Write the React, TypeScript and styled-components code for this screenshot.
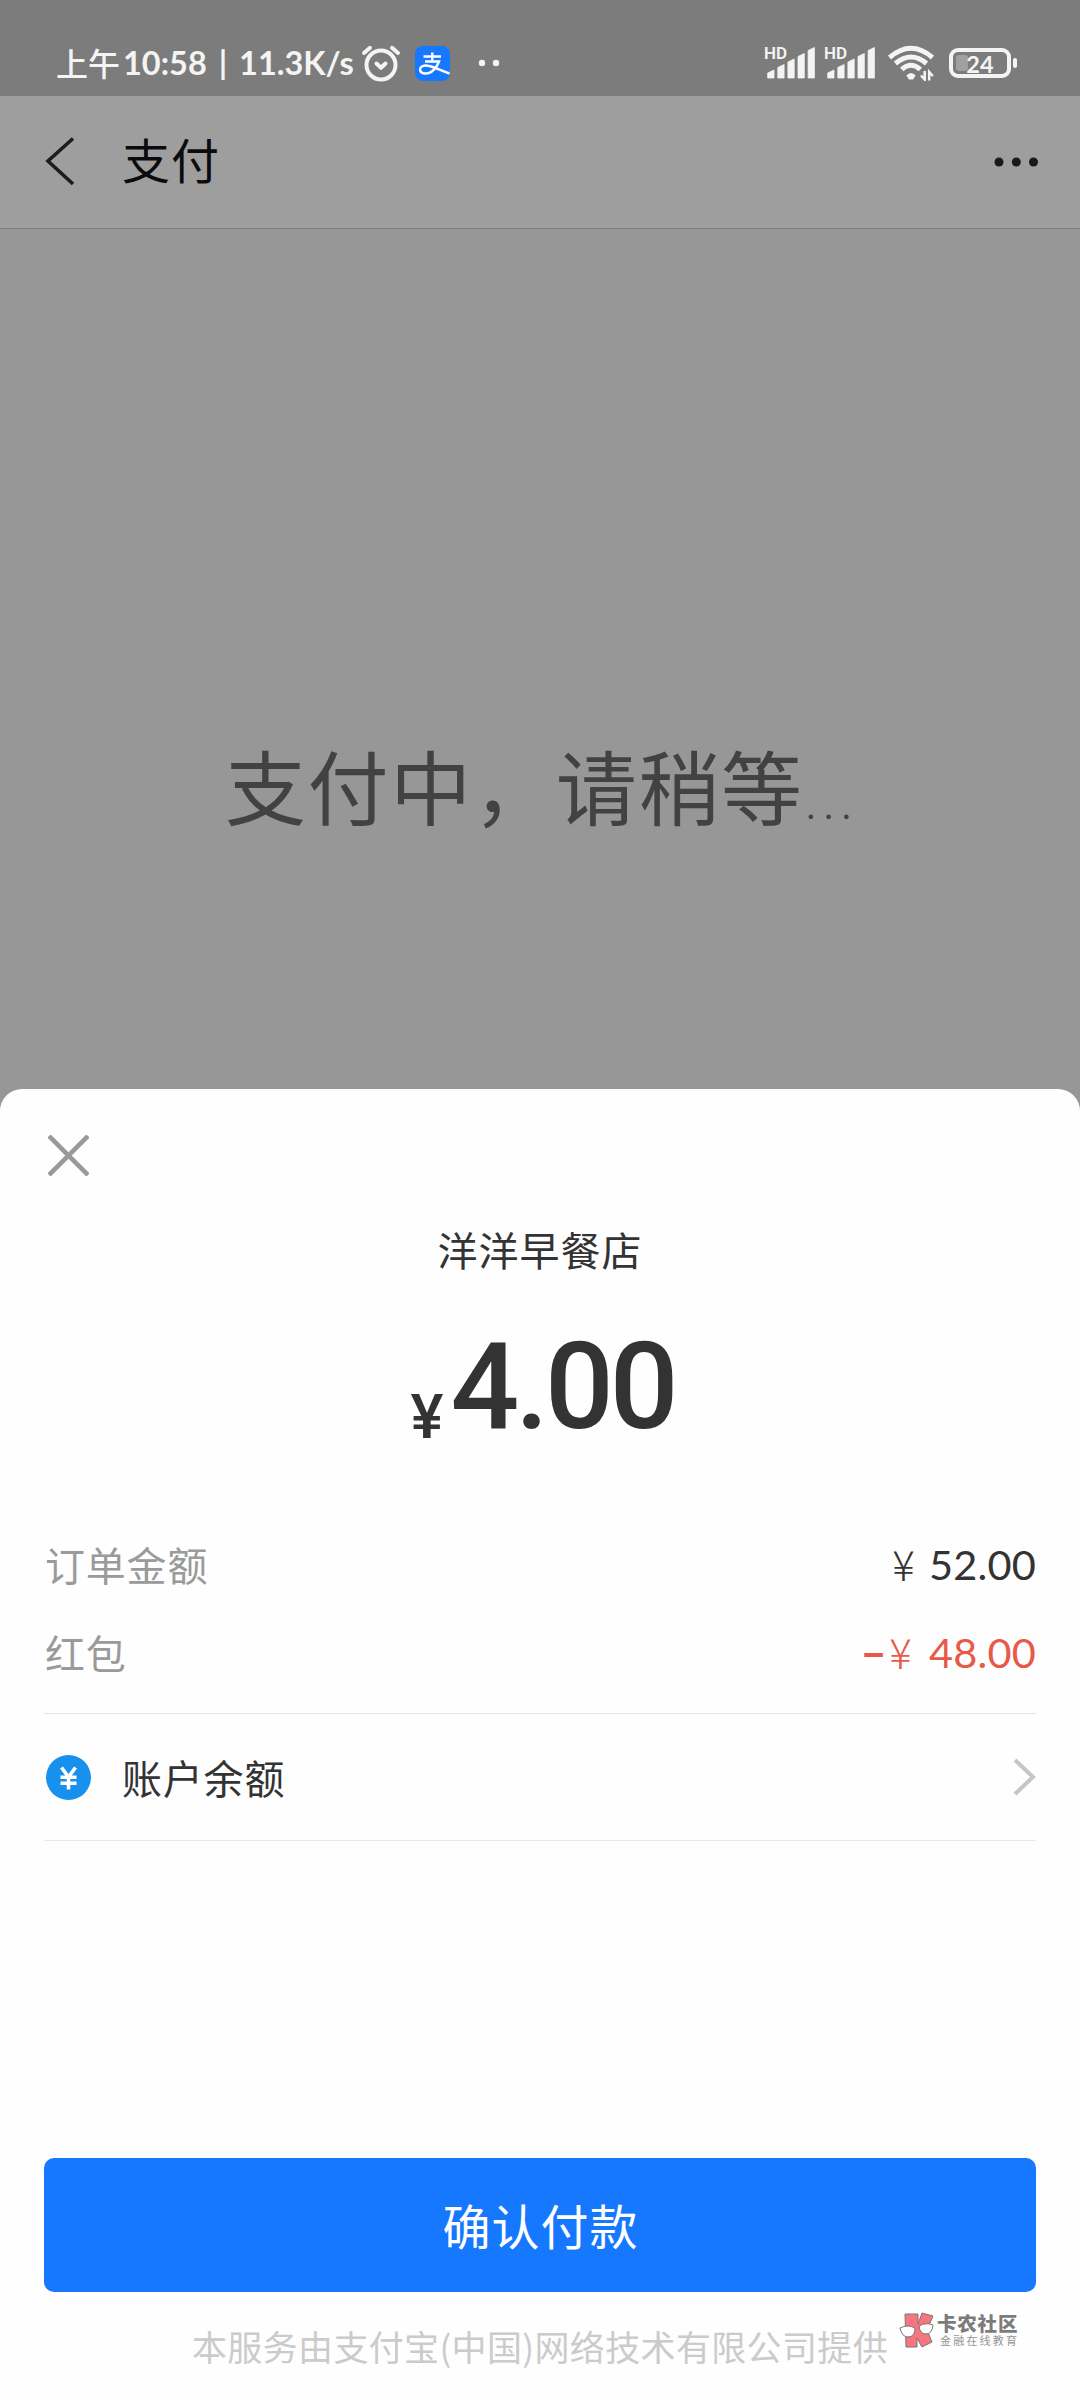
import React from "react";
import styled, { createGlobalStyle } from "styled-components";

const CJK = '"Noto Sans CJK SC", sans-serif';

const Global = createGlobalStyle`
  * { box-sizing: border-box; }
  body { margin: 0; background: #979797; font-family: ${CJK}; }
`;

const Screen = styled.div`
  width: 1080px;
  height: 2400px;
  display: flex;
  flex-direction: column;
  background: #979797;
  overflow: hidden;
`;

const StatusBar = styled.header`
  height: 96px;
  flex: none;
  display: flex;
  justify-content: space-between;
  padding: 32px 63px 0 56px;
  background: #7c7c7c;
  color: #f4f4f4;
`;

const StatusGroup = styled.div`
  display: flex;
  align-items: center;
  height: 62px;
`;

const Clock = styled.span`
  display: flex;
  width: 305px;
  font: 500 32px/62px ${CJK};
  white-space: pre;
`;

const ClockDigits = styled.span`
  margin-left: 3px;
  font: 700 32.5px/64px Lato, sans-serif;
  word-spacing: 4px;
`;

const Glyph = styled.svg<{ $ml?: number }>`
  display: block;
  flex: none;
  margin-left: ${(p) => p.$ml ?? 0}px;
`;

const Signal = styled.div<{ $w: number }>`
  position: relative;
  width: ${(p) => p.$w}px;
  height: 36px;
`;

const HdTag = styled.span`
  position: absolute;
  left: -1px;
  top: 0;
  font: 600 17px/16px Roboto, sans-serif;
`;

const Battery = styled.div`
  position: relative;
  width: 68px;
  height: 30px;
  margin-left: 15px;
`;

const BatteryLevel = styled.span`
  position: absolute;
  left: 0;
  top: 0;
  width: 62px;
  font: 700 23.5px/32px Lato, sans-serif;
  text-align: center;
`;

const NavBar = styled.nav`
  height: 133px;
  flex: none;
  display: flex;
  align-items: center;
  padding: 0 41px 0 45px;
  background: #9e9e9e;
  border-bottom: 1px solid #7f7f7f;
`;

const NavTitle = styled.h1`
  margin: 0 auto 9px 47px;
  font: 400 48px/64px ${CJK};
  letter-spacing: 1px;
  color: #0b0b0b;
`;

const Waiting = styled.main`
  flex: 1;
  display: flex;
  align-items: flex-start;
  justify-content: center;
  padding: 495px 0 0 4px;
  color: #424242;
`;

const WaitingText = styled.span`
  font: 400 81px/120px ${CJK};
  letter-spacing: 1.7px;
  white-space: nowrap;
`;

const Ellipsis = styled.span`
  font: 400 40px/120px Roboto, sans-serif;
  letter-spacing: 7.200px;
  padding: 22px 0 0 2px;
`;

const Sheet = styled.section`
  height: 1311px;
  flex: none;
  display: flex;
  flex-direction: column;
  padding: 46px 44px 0;
  background: #fefefe;
  border-radius: 22px 22px 0 0;
`;

const Merchant = styled.h2`
  margin: 43px 0 0;
  font: 400 40px/60px ${CJK};
  letter-spacing: 1px;
  text-align: center;
  color: #333;
`;

const Price = styled.div`
  display: flex;
  justify-content: center;
  gap: 7px;
  height: 140px;
  margin-top: 38px;
  padding-left: 5px;
  color: #333;
`;

const Currency = styled.span`
  font: 500 62px/64px Roboto, sans-serif;
  padding-top: 68px;
`;

const Amount = styled.strong`
  font: 500 121px/140px Roboto, sans-serif;
  letter-spacing: -4px;
`;

const Line = styled.div`
  display: flex;
  align-items: center;
  justify-content: space-between;
  height: 88px;
`;

const Details = styled.div`
  margin-top: 63px;
  height: 194px;
  border-bottom: 1px solid #e4e4e4;
`;

const Label = styled.span`
  padding-left: 1px;
  font: 400 40px/60px ${CJK};
  letter-spacing: 0.8px;
  color: #9a9a9a;
`;

const Value = styled.span<{ $tone: string }>`
  display: flex;
  align-items: center;
  font: 400 41.5px/62px Lato, sans-serif;
  letter-spacing: 0.2px;
  color: ${(p) => p.$tone};
`;

const Minus = styled.span`
  margin-right: 2px;
  font: 700 46px/60px Lato, sans-serif;
`;

const Yen = styled.span<{ $gap: number }>`
  padding-bottom: 3px;
  font: 300 42px/60px ${CJK};
  margin-right: ${(p) => p.$gap}px;
`;

const Method = styled.div`
  display: flex;
  align-items: center;
  height: 127px;
  border-bottom: 1px solid #e8e8e8;
`;

const MethodName = styled.span`
  margin: 0 auto 0 31px;
  font: 400 40px/60px ${CJK};
  letter-spacing: 0.8px;
  color: #333;
`;

const Confirm = styled.button`
  height: 134px;
  margin: 317px 0 0;
  padding: 0 0 2px 1px;
  border: 0;
  border-radius: 10px;
  background: #1677ff;
  color: #fff;
  font: 400 48px/128px ${CJK};
  letter-spacing: 1px;
`;

const Provider = styled.p`
  margin: 28px 0 0;
  font: 400 35px/52px ${CJK};
  letter-spacing: 0.35px;
  text-align: center;
  color: #cbcbcb;
  white-space: nowrap;
`;

const Watermark = styled.aside`
  position: absolute;
  left: 899px;
  top: 2311px;
  display: flex;
  gap: 2px;
`;

const BrandText = styled.div`
  display: flex;
  flex-direction: column;
`;

const BrandName = styled.b`
  font: 900 19.500px/20px ${CJK};
  letter-spacing: 0.8px;
  color: #7c7c7c;
  padding-top: 2px;
`;

const BrandTag = styled.span`
  font: 400 11px/15px ${CJK};
  letter-spacing: 2.200px;
  color: #959595;
  padding: 0 0 0 3px;
`;

function Bars({ width }: { width: number }) {
  const tops = [25, 19.5, 14, 8.5, 2.5];
  return (
    <Signal $w={width}>
      <HdTag>HD</HdTag>
      <Glyph width="52" height="36">
        {tops.map((t, i) => (
          <path
            key={t}
            d={`M${2.7 + i * 10.1} ${t + 3}L${9 + i * 10.1} ${t}V33H${2.7 + i * 10.1}Z`}
            fill="#f4f4f4"
            stroke="#f4f4f4"
            strokeWidth="0.8"
            strokeLinejoin="round"
          />
        ))}
      </Glyph>
    </Signal>
  );
}

export default function App() {
  return (
    <>
      <Global />
      <Screen>
        <StatusBar>
          <StatusGroup>
            <Clock>上午<ClockDigits>10:58 | 11.3K/s</ClockDigits></Clock>
            <Glyph width="40" height="38" viewBox="0 0 40 38" fill="none" stroke="#f4f4f4" strokeWidth="4" strokeLinecap="round" strokeLinejoin="round">
              <circle cx="20" cy="21" r="14.5" />
              <path d="M3 9 9 3.800M31 3.800l6 5.200M15.500 19.500l4.500 4.300 4.500-4.300" />
            </Glyph>
            <Glyph $ml={14} width="35" height="35" viewBox="0 0 35 35">
              <rect width="35" height="35" rx="8" fill="#1677ff" />
              <path d="M8.500 10.500H26M17.300 6.500v9.500M10 15.500H24C22 21 17 27.500 10.500 27.500c-7.500 0-7-8 0-8 6 0 13 4 24 8" fill="none" stroke="#fff" strokeWidth="2.400" />
            </Glyph>
            <Glyph $ml={28} width="22" height="8" viewBox="0 0 22 8" fill="#f4f4f4">
              <circle cx="4" cy="4" r="3.200" />
              <circle cx="18" cy="4" r="3.200" />
            </Glyph>
          </StatusGroup>
          <StatusGroup>
            <Bars width={60} />
            <Bars width={63} />
            <Glyph width="46" height="36" viewBox="0 0 46 36" fill="none" stroke="#f4f4f4" strokeWidth="5">
              <path d="M1.500 12.500Q23-6 44.500 12.500M7.500 18.500Q23 5.500 38.500 18.500M13.700 24.500Q23 16 32.300 24.500" />
              <path d="M18.300 30.500q4.700-5 9.400 0l-2.700 4h-4Z" fill="#f4f4f4" stroke="none" />
              <path d="M36.700 26v8.500l-3.700-4M41.200 35.500V27l3.700 4" strokeWidth="2.500" />
            </Glyph>
            <Battery>
              <Glyph width="68" height="30" viewBox="0 0 68 30">
                <rect x="2" y="2" width="58" height="26" rx="7" fill="none" stroke="#f4f4f4" strokeWidth="4" />
                <rect x="7" y="7" width="12" height="16" rx="3" fill="#a0a0a0" />
                <rect x="64" y="10" width="4" height="10" rx="2" fill="#f4f4f4" />
              </Glyph>
              <BatteryLevel>24</BatteryLevel>
            </Battery>
          </StatusGroup>
        </StatusBar>
        <NavBar>
          <Glyph width="30" height="50" viewBox="0 0 30 50" fill="none" stroke="#1c1c1c" strokeWidth="3.600">
            <path d="M28 1.500 3 24l25 23" />
          </Glyph>
          <NavTitle>支付</NavTitle>
          <Glyph width="45" height="10" viewBox="0 0 45 10" fill="#1a1a1a">
            <circle cx="5" cy="5" r="4.500" />
            <circle cx="22.300" cy="5" r="4.500" />
            <circle cx="39.500" cy="5" r="4.500" />
          </Glyph>
        </NavBar>
        <Waiting>
          <WaitingText>支付中，请稍等</WaitingText>
          <Ellipsis>...</Ellipsis>
        </Waiting>
        <Sheet>
          <Glyph $ml={4} width="41" height="41" viewBox="0 0 41 41" stroke="#999" strokeWidth="4.600">
            <path d="M1 1l39 39M40 1l-39 39" />
          </Glyph>
          <Merchant>洋洋早餐店</Merchant>
          <Price>
            <Currency>¥</Currency>
            <Amount>4.00</Amount>
          </Price>
          <Details>
            <Line>
              <Label>订单金额</Label>
              <Value $tone="#333"><Yen $gap={14}>¥</Yen>52.00</Value>
            </Line>
            <Line>
              <Label>红包</Label>
              <Value $tone="#e75a48"><Minus>–</Minus><Yen $gap={17}>¥</Yen>48.00</Value>
            </Line>
          </Details>
          <Method>
            <Glyph $ml={2} width="45" height="45" viewBox="0 0 45 45" fill="none" stroke="#fff" strokeWidth="3.600">
              <circle cx="22.500" cy="22.500" r="22.500" fill="#1890ee" stroke="none" />
              <path d="M15.500 12.500l7 9.500 7-9.500M22.500 21v13.500M14.500 22.300h16M14.500 28.300h16" />
            </Glyph>
            <MethodName>账户余额</MethodName>
            <Glyph width="23" height="38" viewBox="0 0 23 38" fill="none" stroke="#c6c6c6" strokeWidth="4">
              <path d="M2 2l18 17L2 36" />
            </Glyph>
          </Method>
          <Confirm>确认付款</Confirm>
          <Provider>本服务由支付宝(中国)网络技术有限公司提供</Provider>
        </Sheet>
      </Screen>
      <Watermark>
        <Glyph width="36" height="38" viewBox="0 0 36 38" stroke="#777" strokeWidth="1">
          <path d="M6 3h13v10l4-11 11 3-6 14 5 12-10 5-5-9v9H7Z" fill="#f8747f" />
          <path d="M1 17q8-4 15 0 0 9-7 9-6 0-8-9ZM20 15q7-4 14-1-1 9-7 9-6 0-7-8Z" fill="#fff" />
        </Glyph>
        <BrandText>
          <BrandName>卡农社区</BrandName>
          <BrandTag>金融在线教育</BrandTag>
        </BrandText>
      </Watermark>
    </>
  );
}
